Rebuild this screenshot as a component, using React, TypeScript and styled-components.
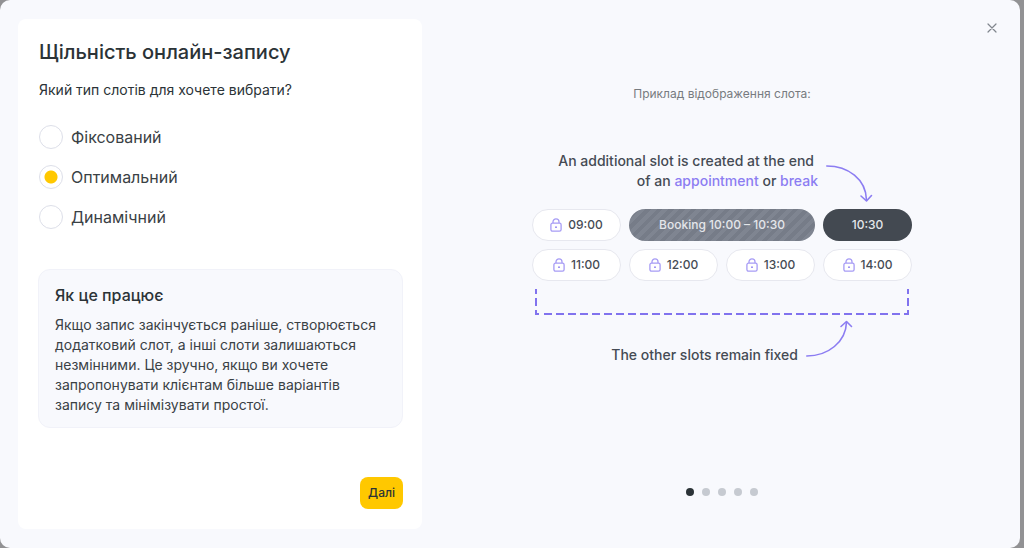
import React, { useState } from "react";
import styled, { createGlobalStyle, css } from "styled-components";

const GlobalStyle = createGlobalStyle`
  *, *::before, *::after { box-sizing: border-box; }
  body {
    margin: 0;
    background: #929294;
    font-family: Inter, "Liberation Sans", sans-serif;
    color: #2b3337;
  }
  h1, h2, p { margin: 0; }
`;

const Dialog = styled.main`
  position: relative;
  display: grid;
  grid-template-columns: minmax(300px, 404fr) minmax(400px, 598fr);
  min-height: 100vh;
  margin-right: 4px;
  padding: 19px 0 19px 18px;
  border-radius: 10px;
  background: #f8f9fd;
`;

const CloseButton = styled.button`
  position: absolute;
  top: 16px;
  right: 16px;
  display: grid;
  place-items: center;
  width: 24px;
  height: 24px;
  padding: 0;
  border: 0;
  background: none;
  color: #80868d;
  cursor: pointer;
`;

const SettingsCard = styled.form`
  display: flex;
  flex-direction: column;
  padding: 20px 19px 20px 20px;
  border-radius: 8px;
  background: #fff;
`;

const Title = styled.h1`
  margin-bottom: 15px;
  padding-left: 1px;
  font-size: 20px;
  line-height: 26px;
  font-weight: 500;
`;

const Options = styled.fieldset`
  display: flex;
  flex-direction: column;
  gap: 16px;
  margin: 0;
  padding: 0;
  border: 0;
`;

const Question = styled.legend`
  margin-bottom: 25px;
  padding: 0 0 0 1px;
  font-size: 14px;
  line-height: 20px;
`;

const Option = styled.label`
  display: flex;
  align-items: center;
  gap: 8px;
  padding-left: 1px;
  font-size: 16px;
  line-height: 24px;
  color: #3a4145;
  cursor: pointer;
`;

const Radio = styled.input`
  appearance: none;
  width: 24px;
  height: 24px;
  margin: 0;
  border: 1px solid #dddfe9;
  border-radius: 50%;
  background: #fff;

  &:checked {
    background: radial-gradient(circle, #ffc800 6px, #fff 7px);
  }
`;

const InfoBox = styled.section`
  margin-top: 40px;
  padding: 15px 16px 12px;
  border: 1px solid #f1f2f9;
  border-radius: 12px;
  background: #f8f9fd;
`;

const InfoTitle = styled.h2`
  margin-bottom: 10px;
  font-size: 16px;
  line-height: 20px;
  font-weight: 500;
`;

const InfoText = styled.p`
  font-size: 14px;
  line-height: 20px;
  color: #3a4145;
`;

const NextButton = styled.button`
  align-self: flex-end;
  height: 32px;
  margin-top: auto;
  padding: 0 8px;
  border: 0;
  border-radius: 8px;
  background: #ffc800;
  color: #2b3337;
  font: 500 12px/16px Inter, "Liberation Sans", sans-serif;
  cursor: pointer;
`;

const Preview = styled.section`
  display: flex;
  flex-direction: column;
  align-items: center;
  padding: 67px 0 33px 2px;
`;

const Caption = styled.p`
  font-size: 12px;
  line-height: 16px;
  color: #777b80;
`;

const Example = styled.div`
  display: flex;
  flex-direction: column;
  width: 380px;
  margin-top: 49px;
  color: #454b54;
`;

const TopNote = styled.div`
  display: flex;
  justify-content: flex-end;
  gap: 8px;
  height: 58px;
  padding-right: 38px;
`;

const BottomNote = styled.div`
  display: flex;
  justify-content: flex-end;
  align-items: flex-end;
  gap: 8px;
  margin-top: 4px;
  padding-right: 58px;
`;

const NoteText = styled.p`
  font-size: 14px;
  line-height: 20px;
  font-weight: 500;
  text-align: right;
`;

const FirstLine = styled.span`
  display: block;
  padding-right: 4px;
`;

const Accent = styled.span`
  color: #8c7df2;
`;

const Slots = styled.div`
  display: grid;
  grid-template-columns: repeat(4, 1fr);
  gap: 8px;
`;

type SlotKind = "locked" | "booking" | "extra";

const slotLook = {
  locked: css`
    border: 1px solid #e7e8ef;
    background: #fff;
  `,
  booking: css`
    grid-column: span 2;
    background: repeating-linear-gradient(135deg, #7f8591 0 4px, #767c88 4px 8px);
    color: #e4e6ea;
  `,
  extra: css`
    background: #434951;
    color: #e4e6ea;
  `,
};

const Slot = styled.div<{ $kind: SlotKind }>`
  display: flex;
  align-items: center;
  justify-content: center;
  gap: 6px;
  height: 32px;
  border-radius: 16px;
  font-size: 12px;
  line-height: 16px;
  font-weight: 500;
  ${({ $kind }) => slotLook[$kind]}
`;

const Bracket = styled.svg`
  display: block;
  margin: 8px 0 0 2px;
`;

const Dots = styled.nav`
  display: flex;
  gap: 8px;
  margin-top: auto;
`;

const Dot = styled.button<{ $active: boolean }>`
  width: 8px;
  height: 8px;
  padding: 0;
  border: 0;
  border-radius: 50%;
  background: ${({ $active }) => ($active ? "#2b3337" : "#c6cad1")};
  cursor: pointer;
`;

const LockIcon = () => (
  <svg width="12" height="14" viewBox="0 0 12 14" fill="none" stroke="#a79cf5" strokeWidth="1.3" aria-hidden="true">
    <rect x="0.9" y="5.2" width="10.2" height="8" rx="1.6" />
    <path d="M3 5V3.8a3 3 0 0 1 6 0V5" />
    <circle cx="6" cy="9.2" r="0.9" fill="#8c7df2" stroke="none" />
  </svg>
);

const slots: { text: string; kind: SlotKind }[] = [
  { text: "09:00", kind: "locked" },
  { text: "Booking 10:00 – 10:30", kind: "booking" },
  { text: "10:30", kind: "extra" },
  { text: "11:00", kind: "locked" },
  { text: "12:00", kind: "locked" },
  { text: "13:00", kind: "locked" },
  { text: "14:00", kind: "locked" },
];

const options = ["Фіксований", "Оптимальний", "Динамічний"];

export default function App() {
  const [selected, setSelected] = useState(options[1]);
  const [page, setPage] = useState(0);

  return (
    <>
      <GlobalStyle />
      <Dialog>
        <SettingsCard onSubmit={(e) => e.preventDefault()}>
          <Title>Щільність онлайн-запису</Title>
          <Options>
            <Question>Який тип слотів для хочете вибрати?</Question>
            {options.map((name) => (
              <Option key={name}>
                <Radio
                  type="radio"
                  name="slot-type"
                  value={name}
                  checked={selected === name}
                  onChange={() => setSelected(name)}
                />
                {name}
              </Option>
            ))}
          </Options>
          <InfoBox>
            <InfoTitle>Як це працює</InfoTitle>
            <InfoText>
              Якщо запис закінчується раніше, створюється додатковий слот, а інші слоти залишаються
              незмінними. Це зручно, якщо ви хочете запропонувати клієнтам більше варіантів запису та
              мінімізувати простої.
            </InfoText>
          </InfoBox>
          <NextButton type="submit">Далі</NextButton>
        </SettingsCard>

        <Preview>
          <Caption>Приклад відображення слота:</Caption>
          <Example>
            <TopNote>
              <NoteText>
                <FirstLine>An additional slot is created at the end</FirstLine>
                of an <Accent>appointment</Accent> or <Accent>break</Accent>
              </NoteText>
              <svg width="48" height="52" viewBox="0 0 48 52" fill="none" stroke="#8c7df2" strokeWidth="1.6" strokeLinecap="round" strokeLinejoin="round" aria-hidden="true">
                <path d="M0.8 15C22 15 40 28 40.5 49" />
                <path d="M35 45L40.5 50L45.5 44.5" />
              </svg>
            </TopNote>
            <Slots>
              {slots.map(({ text, kind }) => (
                <Slot key={text} $kind={kind}>
                  {kind === "locked" && <LockIcon />}
                  {text}
                </Slot>
              ))}
            </Slots>
            <Bracket width="376" height="27" viewBox="0 0 376 27" fill="none" stroke="#8173ee" strokeWidth="2" aria-hidden="true">
              <path d="M2 0V5M2 9V17M2 21V25H5M374 0V5M374 9V17M374 21V25H370" />
              <path d="M10 25H368" strokeDasharray="8 4" />
            </Bracket>
            <BottomNote>
              <NoteText>The other slots remain fixed</NoteText>
              <svg width="48" height="45" viewBox="0 0 48 45" fill="none" stroke="#8c7df2" strokeWidth="1.6" strokeLinecap="round" strokeLinejoin="round" aria-hidden="true">
                <path d="M0.8 36C22 36 40 22 40.5 2" />
                <path d="M35 6.5L40.5 1.5L45.5 6.5" />
              </svg>
            </BottomNote>
          </Example>
          <Dots aria-label="Приклади">
            {[0, 1, 2, 3, 4].map((n) => (
              <Dot key={n} type="button" $active={n === page} aria-label={`${n + 1}`} onClick={() => setPage(n)} />
            ))}
          </Dots>
        </Preview>

        <CloseButton type="button" aria-label="Закрити">
          <svg width="10" height="10" viewBox="0 0 10 10" stroke="currentColor" strokeWidth="1.2" strokeLinecap="round" aria-hidden="true">
            <path d="M1 1L9 9M9 1L1 9" />
          </svg>
        </CloseButton>
      </Dialog>
    </>
  );
}
